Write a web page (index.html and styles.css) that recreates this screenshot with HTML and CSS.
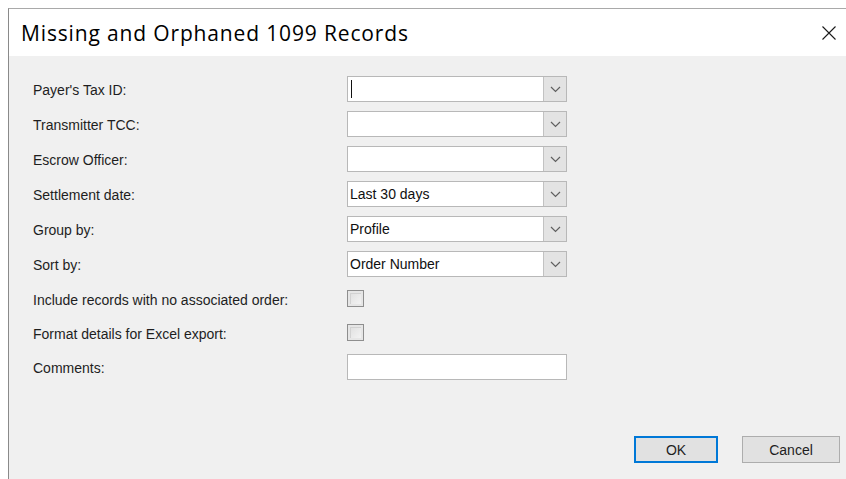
FILE: index.html
```html
<!DOCTYPE html>
<html>
<head>
<meta charset="utf-8">
<title>Missing and Orphaned 1099 Records</title>
<link rel="stylesheet" href="styles.css">
</head>
<body>
<div class="window">
  <div class="titlebar">
    <span class="title">Missing and Orphaned 1099 Records</span>
    <span class="close">
      <svg width="16" height="16" viewBox="0 0 16 16"><path d="M1.5 1.5 L14.5 14.5 M14.5 1.5 L1.5 14.5" stroke="#1a1a1a" stroke-width="1.1" fill="none"/></svg>
    </span>
  </div>
  <div class="client">
    <div class="form">
      <label class="lbl">Payer's Tax ID:</label>
      <div class="combo"><span class="val"><span class="caret"></span></span><span class="drop"><svg width="11" height="7" viewBox="0 0 11 7"><path d="M1 1 L5.5 5.5 L10 1" stroke="#606060" stroke-width="1.2" fill="none"/></svg></span></div>

      <label class="lbl">Transmitter TCC:</label>
      <div class="combo"><span class="val"></span><span class="drop"><svg width="11" height="7" viewBox="0 0 11 7"><path d="M1 1 L5.5 5.5 L10 1" stroke="#606060" stroke-width="1.2" fill="none"/></svg></span></div>

      <label class="lbl">Escrow Officer:</label>
      <div class="combo"><span class="val"></span><span class="drop"><svg width="11" height="7" viewBox="0 0 11 7"><path d="M1 1 L5.5 5.5 L10 1" stroke="#606060" stroke-width="1.2" fill="none"/></svg></span></div>

      <label class="lbl">Settlement date:</label>
      <div class="combo"><span class="val">Last 30 days</span><span class="drop"><svg width="11" height="7" viewBox="0 0 11 7"><path d="M1 1 L5.5 5.5 L10 1" stroke="#606060" stroke-width="1.2" fill="none"/></svg></span></div>

      <label class="lbl">Group by:</label>
      <div class="combo"><span class="val">Profile</span><span class="drop"><svg width="11" height="7" viewBox="0 0 11 7"><path d="M1 1 L5.5 5.5 L10 1" stroke="#606060" stroke-width="1.2" fill="none"/></svg></span></div>

      <label class="lbl">Sort by:</label>
      <div class="combo"><span class="val">Order Number</span><span class="drop"><svg width="11" height="7" viewBox="0 0 11 7"><path d="M1 1 L5.5 5.5 L10 1" stroke="#606060" stroke-width="1.2" fill="none"/></svg></span></div>

      <label class="lbl">Include records with no associated order:</label>
      <div class="checkcell"><span class="check"></span></div>

      <label class="lbl">Format details for Excel export:</label>
      <div class="checkcell"><span class="check"></span></div>

      <label class="lbl">Comments:</label>
      <div class="textbox"></div>
    </div>
    <div class="buttons">
      <button class="btn default">OK</button>
      <button class="btn cancel">Cancel</button>
    </div>
  </div>
</div>
</body>
</html>
```
FILE: styles.css
```css
html, body {
  margin: 0;
  padding: 0;
  background: #ffffff;
  width: 846px;
  height: 479px;
  overflow: hidden;
}

.window {
  margin: 8px 0 0 8px;
  height: 471px;
  border-top: 1px solid #a9a9a9;
  border-left: 1px solid #8a8a8a;
  box-sizing: border-box;
  display: flex;
  flex-direction: column;
  font-family: "Liberation Sans", Arial, sans-serif;
  font-size: 14px;
  color: #1e1e1e;
}

.titlebar {
  height: 47px;
  background: #ffffff;
  display: flex;
  align-items: center;
  justify-content: space-between;
  padding: 0 9px 0 12px;
}

.title {
  font-family: "Open Sans", "Noto Sans", sans-serif;
  font-size: 21px;
  color: #000;
  letter-spacing: 0.85px;
}

.close {
  display: flex;
  width: 16px;
  height: 16px;
  margin-top: 1px;
}

.client {
  flex: 1;
  background: #f0f0f0;
  display: flex;
  flex-direction: column;
}

.form {
  display: grid;
  grid-template-columns: 314px 220px;
  grid-template-rows: repeat(6, 26px) 25px 25px 26px;
  row-gap: 9px;
  padding: 20px 0 0 24px;
  align-items: center;
}

.lbl {
  line-height: 16px;
  padding-top: 2px;
  white-space: nowrap;
}

.combo {
  height: 26px;
  box-sizing: border-box;
  border: 1px solid #b8b8b8;
  background: #fff;
  display: flex;
}

.val {
  flex: 1;
  display: flex;
  align-items: center;
  padding-left: 2px;
  color: #101010;
  line-height: 16px;
}

.caret {
  width: 1px;
  height: 18px;
  background: #111;
  margin-left: 1px;
}

.drop {
  width: 22px;
  background: #e3e3e3;
  border-left: 1px solid #c2c2c2;
  display: flex;
  align-items: center;
  justify-content: center;
}

.checkcell {
  display: flex;
  align-items: center;
  height: 25px;
}

.check {
  width: 17px;
  height: 17px;
  box-sizing: border-box;
  border: 1px solid #8e8e8e;
  background: linear-gradient(135deg, #dcdcdc 0%, #ececec 60%, #f6f6f6 100%);
  box-shadow: inset 0 0 0 2px #e6e6e6, inset 1px 1px 0 2px #d2d2d2;
}

.textbox {
  height: 26px;
  box-sizing: border-box;
  border: 1px solid #b8b8b8;
  background: #fff;
}

.buttons {
  margin-top: auto;
  display: flex;
  justify-content: flex-end;
  gap: 24px;
  padding: 0 6px 16px 0;
}

.btn {
  height: 27px;
  box-sizing: border-box;
  background: #e1e1e1;
  border: 1px solid #adadad;
  font-family: "Liberation Sans", Arial, sans-serif;
  font-size: 14px;
  color: #1e1e1e;
  padding: 0;
}

.btn.default {
  width: 84px;
  border: 2px solid #0078d7;
}

.btn.cancel {
  width: 98px;
}
```
